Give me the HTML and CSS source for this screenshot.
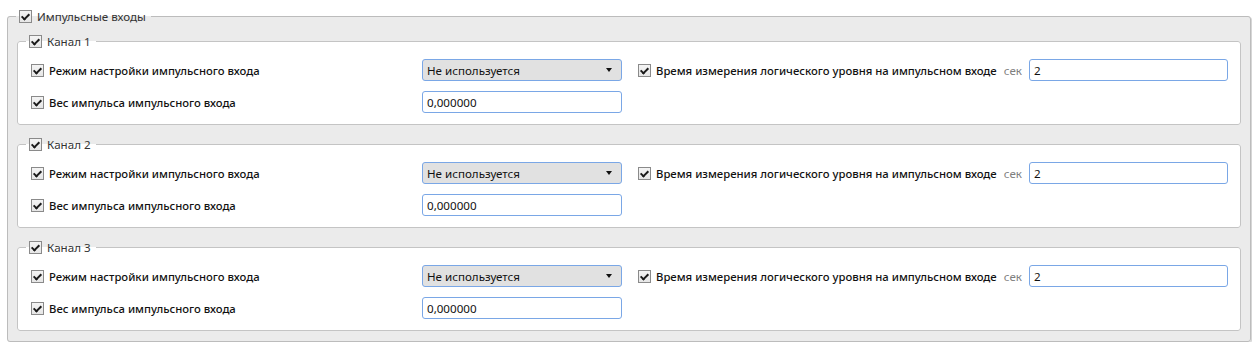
FILE: index.html
```html
<!DOCTYPE html>
<html>
<head>
    <title>Импульсные входы</title>
    <link rel="stylesheet" href="styles.css">
</head>
<body>
    <fieldset class="group outer">
        <legend class="group-title"><span class="check"></span>Импульсные входы</legend>
        <div class="channels">
            <fieldset class="group channel">
                <legend class="group-title"><span class="check"></span>Канал 1</legend>
                <div class="rows">
                    <label class="opt"><span class="check"></span>Режим настройки импульсного входа</label>
                    <div class="select">Не используется<span class="arrow"></span></div>
                    <div class="side">
                        <label class="opt"><span class="check"></span>Время измерения логического уровня на импульсном входе</label>
                        <span class="unit">сек</span>
                    </div>
                    <div class="field">2</div>
                    <label class="opt"><span class="check"></span>Вес импульса импульсного входа</label>
                    <div class="field">0,000000</div>
                </div>
            </fieldset>
            <fieldset class="group channel">
                <legend class="group-title"><span class="check"></span>Канал 2</legend>
                <div class="rows">
                    <label class="opt"><span class="check"></span>Режим настройки импульсного входа</label>
                    <div class="select">Не используется<span class="arrow"></span></div>
                    <div class="side">
                        <label class="opt"><span class="check"></span>Время измерения логического уровня на импульсном входе</label>
                        <span class="unit">сек</span>
                    </div>
                    <div class="field">2</div>
                    <label class="opt"><span class="check"></span>Вес импульса импульсного входа</label>
                    <div class="field">0,000000</div>
                </div>
            </fieldset>
            <fieldset class="group channel">
                <legend class="group-title"><span class="check"></span>Канал 3</legend>
                <div class="rows">
                    <label class="opt"><span class="check"></span>Режим настройки импульсного входа</label>
                    <div class="select">Не используется<span class="arrow"></span></div>
                    <div class="side">
                        <label class="opt"><span class="check"></span>Время измерения логического уровня на импульсном входе</label>
                        <span class="unit">сек</span>
                    </div>
                    <div class="field">2</div>
                    <label class="opt"><span class="check"></span>Вес импульса импульсного входа</label>
                    <div class="field">0,000000</div>
                </div>
            </fieldset>
        </div>
    </fieldset>
</body>
</html>
```

FILE: styles.css
```css
body {
    margin: 9px 0 0 7px;
    background-color: #fff;
    color: #1e1e1e;
    font-family: "Noto Sans", "Open Sans", sans-serif;
    font-size: 11.6px;
}
.group {
    margin: 0;
    padding: 0;
    border: 1px solid #c4c4c4;
    border-radius: 3px;
    min-inline-size: 0;
}
.outer {
    width: 1244px;
    box-sizing: border-box;
    background-color: #ebebeb;
    border-color: #bcbcbc;
    box-shadow: 1px 1px 0 #d6d6d6;
}
.channel {
    background-color: #fff;
}
.group-title {
    display: flex;
    align-items: center;
    height: 14px;
    margin-left: 8px;
    padding: 0 5px 0 3px;
    color: #333;
}
.channels {
    display: flex;
    flex-direction: column;
    gap: 12px;
    padding: 11px 9px 10px 9px;
}
.check {
    position: relative;
    flex: none;
    width: 11px;
    height: 11px;
    margin-right: 5px;
    border: 1px solid #8a8a8a;
    background: linear-gradient(#f4f4f4, #e6e6e6);
}
.check::after {
    content: "";
    position: absolute;
    left: 3px;
    top: 1px;
    width: 3px;
    height: 6px;
    border-right: 2px solid #1a1a1a;
    border-bottom: 2px solid #1a1a1a;
    transform: rotate(45deg);
}
.rows {
    display: grid;
    grid-template-columns: 391px 200px minmax(0, 1fr) 199px;
    grid-auto-rows: 32px;
    align-items: center;
    padding: 6px 12px 6px 13px;
}
.opt {
    display: flex;
    align-items: center;
    color: #111;
    font-size: 11.3px;
    font-weight: 500;
    white-space: nowrap;
}
.side {
    display: flex;
    align-items: center;
    justify-content: space-between;
    padding: 0 7px 0 16px;
}
.unit {
    color: #808080;
}
.select,
.field {
    display: flex;
    align-items: center;
    height: 22px;
    box-sizing: border-box;
    padding: 0 4px;
    border: 1px solid #7aa7e6;
    border-radius: 3px;
    background-color: #fff;
    color: #111;
}
.select {
    justify-content: space-between;
    background-color: #e1e1e1;
    padding-right: 9px;
}
.arrow {
    width: 0;
    height: 0;
    border-left: 3px solid transparent;
    border-right: 3px solid transparent;
    border-top: 4px solid #111;
}
```
